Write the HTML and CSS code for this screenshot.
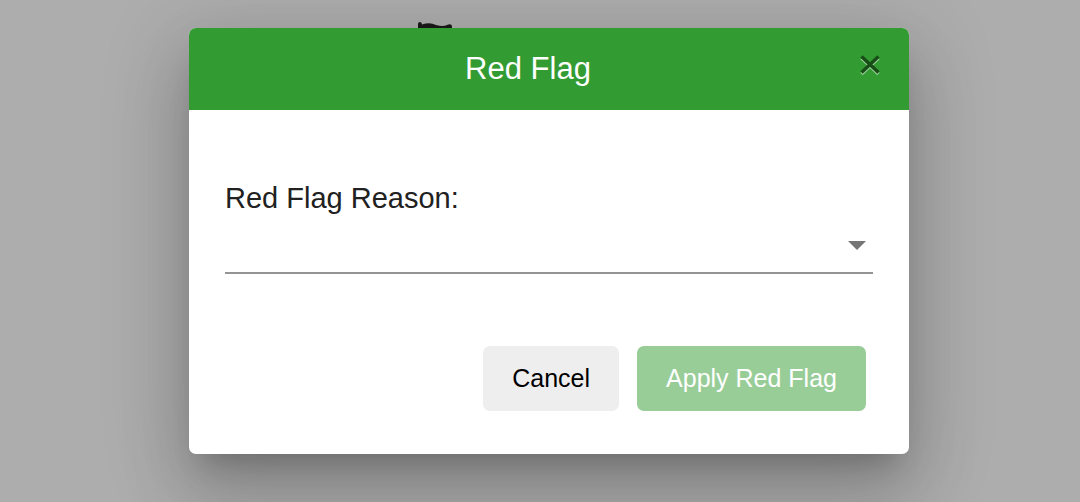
FILE: index.html
```html
<!DOCTYPE html>
<html lang="en">
<head>
    <meta charset="UTF-8">
    <meta name="viewport" content="width=device-width, initial-scale=1.0">
    <title>Red Flag</title>
    <link rel="stylesheet" href="styles.css">
</head>
<body>
    <!-- page icon, mostly hidden behind the dialog -->
    <svg class="page-flag" width="36" height="40" viewBox="0 0 36 40" aria-hidden="true">
        <path d="M1 40V2Q1 0 3 0Q5 0 5 2.5Q13 0 19 3Q26 5 30 3Q35 1 35 5V26Q28 30 18 26Q12 24 5 26V40Z" fill="#1a1a1a"/>
    </svg>

    <form class="dialog" role="dialog" aria-labelledby="dialog-title">
        <header class="dialog-header">
            <h1 class="dialog-title" id="dialog-title">Red Flag</h1>
            <button class="close" type="button" aria-label="Close">
                <svg width="22" height="22" viewBox="0 0 22 22" aria-hidden="true">
                    <path d="M2.5 4L19.5 20M19.5 4L2.5 20" stroke="#98cd98" stroke-width="3.4"/>
                    <path d="M2.5 2.5L19.5 18.5M19.5 2.5L2.5 18.5" stroke="#184d18" stroke-width="3.4"/>
                </svg>
            </button>
        </header>

        <div class="dialog-body">
            <label class="field-label" for="reason">Red Flag Reason:</label>
            <div class="select-wrap">
                <select class="reason-select" id="reason">
                    <option value=""></option>
                </select>
                <svg class="arrow" width="18" height="9" viewBox="0 0 18 9" aria-hidden="true">
                    <path d="M0 0H18L9 9Z" fill="#757575"/>
                </svg>
            </div>
        </div>

        <div class="dialog-actions">
            <button class="btn btn-cancel" type="button">Cancel</button>
            <button class="btn btn-apply" type="submit" disabled>Apply Red Flag</button>
        </div>
    </form>
</body>
</html>
```
FILE: styles.css
```css
* {
    box-sizing: border-box;
}

body {
    margin: 0;
    padding: 28px 0 48px 18px;
    background: #adadad;
    color: #212121;
    font-family: "Liberation Sans", Arial, sans-serif;
}

.page-flag {
    position: absolute;
    top: 22px;
    left: 417px;
}

.dialog {
    position: relative;
    max-width: 720px;
    margin: 0 auto;
    overflow: hidden;
    background: #fff;
    border-radius: 7px;
    box-shadow: 0 20px 27px -13px rgba(0, 0, 0, 0.2),
                0 43px 68px 5px rgba(0, 0, 0, 0.14),
                0 16px 83px 14px rgba(0, 0, 0, 0.12);
}

.dialog-header {
    display: flex;
    align-items: flex-start;
    gap: 28px;
    padding: 23px 28px 23px 36px;
    background: #329b32;
    text-align: center;
}

.dialog-title {
    flex: 1;
    margin: 0;
    color: #fff;
    font-size: 31px;
    font-weight: 400;
    line-height: 36px;
}

.close {
    padding: 3px 0 0;
    border: 0;
    background: none;
    cursor: pointer;
}

.close svg {
    display: block;
}

.dialog-body {
    padding: 72px 36px;
}

.field-label {
    display: block;
    font-size: 29px;
    line-height: 32px;
}

.select-wrap {
    position: relative;
}

.reason-select {
    display: block;
    width: 100%;
    height: 60px;
    padding: 0 36px 0 0;
    border: 0;
    border-bottom: 2px solid #949494;
    border-radius: 0;
    background: transparent;
    color: inherit;
    font: inherit;
    font-size: 29px;
    appearance: none;
}

.arrow {
    position: absolute;
    top: 27px;
    right: 7px;
    pointer-events: none;
}

.dialog-actions {
    display: flex;
    flex-wrap: wrap;
    justify-content: flex-end;
    gap: 18px;
    padding: 0 43px 43px;
}

.btn {
    padding: 18px 29px;
    border: 0;
    border-radius: 7px;
    font-family: inherit;
    font-size: 25px;
    line-height: 29px;
}

.btn-cancel {
    background: #eee;
    color: #000;
}

.btn-apply {
    background: #98cd98;
    color: #fff;
}
```
